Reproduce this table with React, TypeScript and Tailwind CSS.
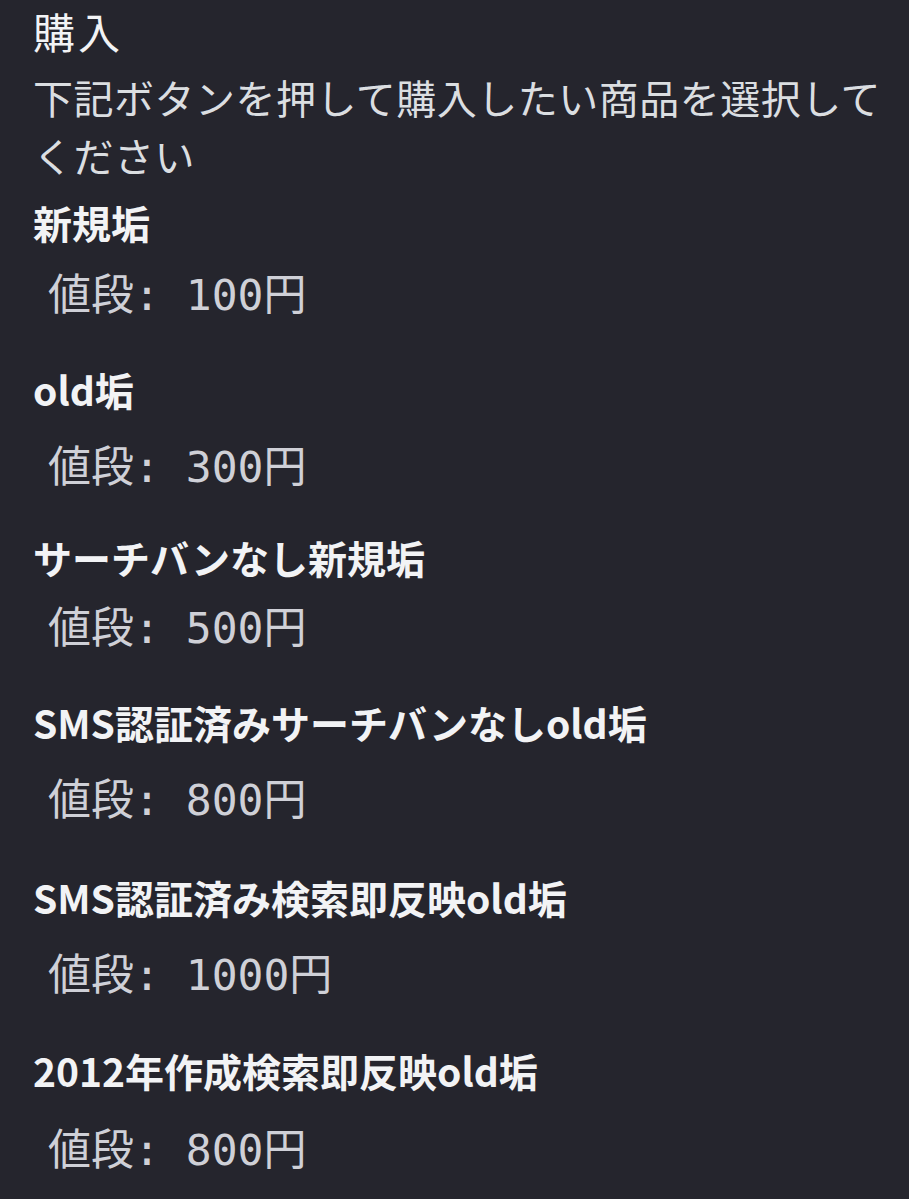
import React from "react";

const fields = [
  { name: "新規垢", price: "100円", before: 13, mid: 23 },
  { name: "old垢", price: "300円", before: 44, mid: 28 },
  { name: "サーチバンなし新規垢", price: "500円", before: 40, mid: 21 },
  { name: "SMS認証済みサーチバンなしold垢", price: "800円", before: 44, mid: 28 },
  { name: "SMS認証済み検索即反映old垢", price: "1000円", before: 47, mid: 28 },
  { name: "2012年作成検索即反映old垢", price: "800円", before: 45, mid: 30 },
];

export default function App() {
  return (
    <div
      className="min-h-[1199px] w-[909px] bg-[#25252d] pl-[33px] pr-[20px] pt-0"
      style={{ fontFamily: '"Noto Sans CJK JP", "Noto Sans", sans-serif' }}
    >
      <div className="text-[42px] leading-[62px] tracking-[3px] font-normal text-[#f2f3f5]">購入</div>
      <div className="mt-[6px] text-[40px] leading-[58px] tracking-[0.5px] text-[#dbdee1]">
        下記ボタンを押して購入したい商品を選択してください
      </div>
      <div className="flex flex-col">
        {fields.map((f, i) => (
          <div key={i} style={{ marginTop: f.before }}>
            <div className="text-[39px] leading-[50px] font-bold text-[#f2f3f5]">{f.name}</div>
            <div
              className="pl-[15px] text-[43px] leading-[50px] text-[#cfd0d7]"
              style={{ marginTop: f.mid, fontFamily: '"DejaVu Sans Mono", "Noto Sans CJK JP", monospace' }}
            >
              値段: {f.price}
            </div>
          </div>
        ))}
      </div>
    </div>
  );
}
